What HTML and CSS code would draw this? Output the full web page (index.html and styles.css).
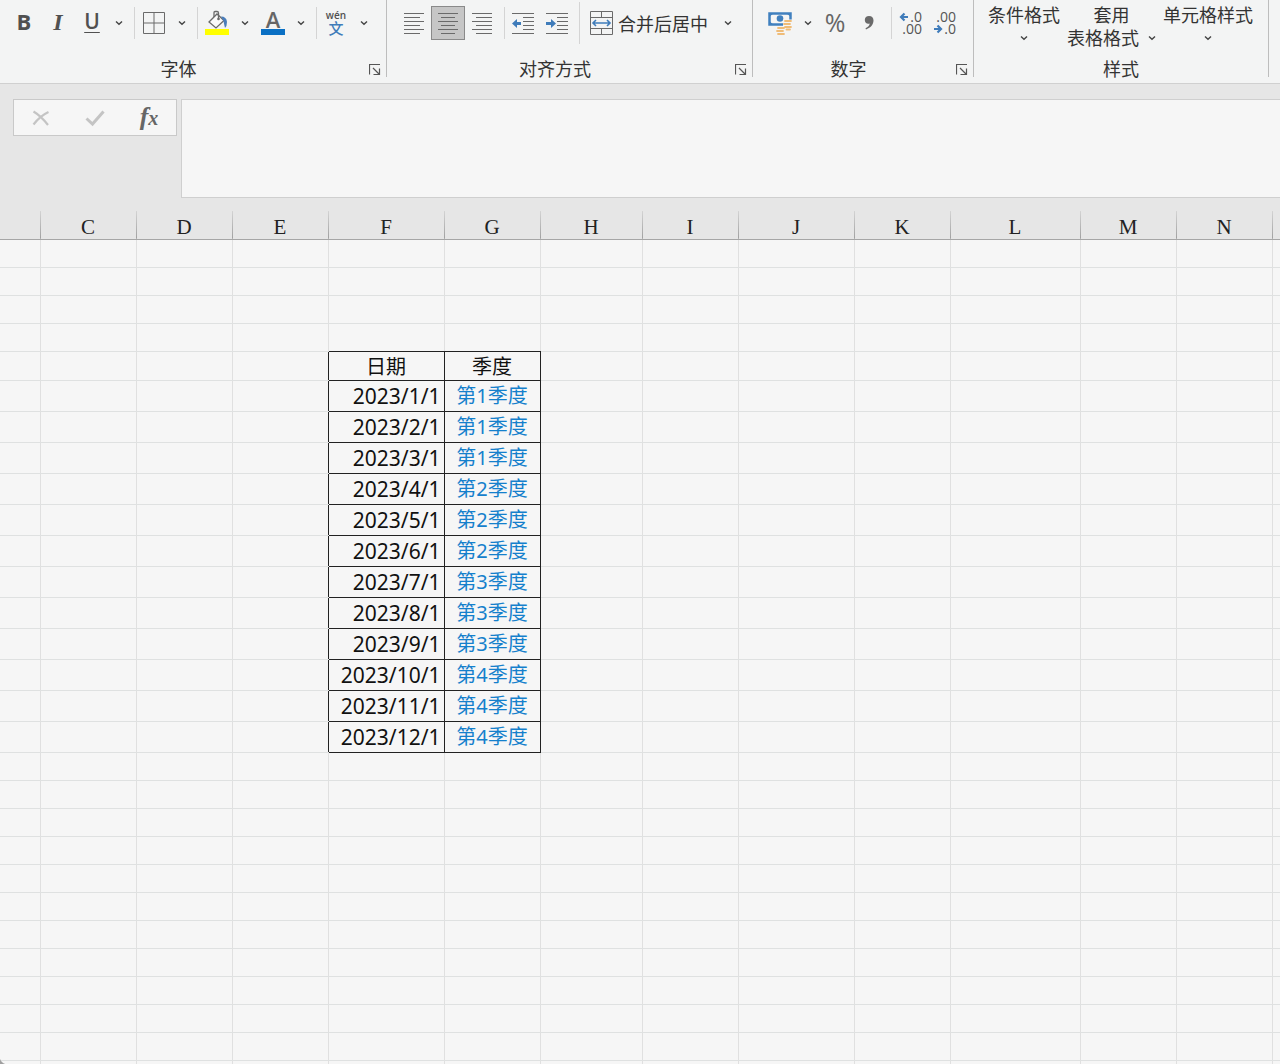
FILE: index.html
```html
<!DOCTYPE html>
<html lang="zh-CN">
<head>
    <meta charset="UTF-8">
    <meta name="viewport" content="width=device-width, initial-scale=1.0">
    <title>季度</title>
    <link rel="stylesheet" href="styles.css">
</head>
<body>
    <svg class="defs" aria-hidden="true">
        <symbol id="chevron" viewBox="0 0 8 6">
            <path d="M1 1.5 L4 4.3 L7 1.5" fill="none" stroke="#444" stroke-width="1.4"/>
        </symbol>
        <symbol id="launcher" viewBox="0 0 12 12">
            <path d="M.5 10.500 V.5 H11 M4 4 L10 10 M10.500 4.500 V10.500 H4.500" fill="none" stroke="#555" stroke-width="1.200"/>
        </symbol>
    </svg>

    <div class="ribbon">
        <!-- 字体 -->
        <section class="group">
            <div class="tools tools-font">
                <button class="tool bold" aria-label="加粗">B</button>
                <button class="tool italic" aria-label="倾斜">I</button>
                <button class="tool underline" aria-label="下划线">U</button>
                <button class="drop" aria-label="下划线选项"><svg width="8" height="6"><use href="#chevron"/></svg></button>
                <span class="sep"></span>
                <button class="tool wide" aria-label="边框">
                    <svg width="22" height="22" viewBox="0 0 22 22"><path d="M.5 .5 H21.500 V21.500 H.5 Z M11 .5 V21.500 M.5 11 H21.500" fill="none" stroke="#6a6a6a"/></svg>
                </button>
                <button class="drop" aria-label="边框选项"><svg width="8" height="6"><use href="#chevron"/></svg></button>
                <span class="sep"></span>
                <button class="tool wide" aria-label="填充颜色">
                    <svg width="24" height="28" viewBox="0 0 24 28">
                        <path d="M4 13 L12 5 L19 11.500 L11 19 Z" fill="#fafafa" stroke="#6a6a6a" stroke-width="1.300"/>
                        <path d="M9 8 V3.500 Q9 2.500 10 2.500 H12 Q13.500 2.500 13.500 4 V10" fill="none" stroke="#6a6a6a" stroke-width="1.300"/>
                        <circle cx="13.500" cy="10" r="1.300" fill="#6a6a6a"/>
                        <path d="M16 7.500 Q21.500 7.500 22 13 Q22 17 20 19 Q19 15 18.500 12 Z" fill="#4a7ebb"/>
                        <rect y="20" width="24" height="6" fill="#ff0"/>
                    </svg>
                </button>
                <button class="drop" aria-label="填充颜色选项"><svg width="8" height="6"><use href="#chevron"/></svg></button>
                <button class="tool wide" aria-label="字体颜色">
                    <svg width="24" height="28" viewBox="0 0 24 28">
                        <text class="letter-a" x="12" y="19" text-anchor="middle">A</text>
                        <rect y="20" width="24" height="6" fill="#0a70c4"/>
                    </svg>
                </button>
                <button class="drop" aria-label="字体颜色选项"><svg width="8" height="6"><use href="#chevron"/></svg></button>
                <span class="sep"></span>
                <button class="tool wide pinyin" aria-label="拼音指南"><span>wén</span><b>文</b></button>
                <button class="drop" aria-label="拼音选项"><svg width="8" height="6"><use href="#chevron"/></svg></button>
            </div>
            <div class="caption">
                <span>字体</span>
                <button class="launch" aria-label="字体设置"><svg width="12" height="12"><use href="#launcher"/></svg></button>
            </div>
        </section>
        <span class="divider"></span>

        <!-- 对齐方式 -->
        <section class="group">
            <div class="tools tools-align">
                <button class="tool" aria-label="左对齐">
                    <svg width="22" height="22" viewBox="0 0 22 22"><path d="M1 1.500 H21 M1 5.500 H17 M1 9.500 H21 M1 13.500 H17 M1 17.500 H21 M1 21.500 H17" stroke="#6a6a6a"/></svg>
                </button>
                <button class="tool active" aria-label="居中">
                    <svg width="22" height="22" viewBox="0 0 22 22"><path d="M1 1.500 H21 M4 5.500 H18 M1 9.500 H21 M4 13.500 H18 M1 17.500 H21 M4 21.500 H18" stroke="#6a6a6a"/></svg>
                </button>
                <button class="tool" aria-label="右对齐">
                    <svg width="22" height="22" viewBox="0 0 22 22"><path d="M1 1.500 H21 M5 5.500 H21 M1 9.500 H21 M5 13.500 H21 M1 17.500 H21 M5 21.500 H21" stroke="#6a6a6a"/></svg>
                </button>
                <span class="sep"></span>
                <button class="tool" aria-label="减少缩进量">
                    <svg width="22" height="22" viewBox="0 0 22 22">
                        <path d="M0 1.500 H22 M11 5.500 H22 M11 9.500 H22 M11 13.500 H22 M11 17.500 H22 M0 21.500 H22" stroke="#6a6a6a"/>
                        <path d="M0 11.500 L5 7 V10 H9 V13 H5 V16 Z" fill="#3f7cba"/>
                    </svg>
                </button>
                <button class="tool" aria-label="增加缩进量">
                    <svg width="22" height="22" viewBox="0 0 22 22">
                        <path d="M0 1.500 H22 M11 5.500 H22 M11 9.500 H22 M11 13.500 H22 M11 17.500 H22 M0 21.500 H22" stroke="#6a6a6a"/>
                        <path d="M10 11.500 L5 7 V10 H0 V13 H5 V16 Z" fill="#3f7cba"/>
                    </svg>
                </button>
                <span class="sep tall"></span>
                <button class="merge">
                    <svg width="24" height="24" viewBox="0 0 24 24">
                        <path d="M1.500 .5 H23.500 V23.500 H1.500 Z M1.500 6.500 H23.500 M1.500 17.500 H23.500 M12.500 .5 V6.500 M12.500 17.500 V23.500" fill="none" stroke="#6a6a6a"/>
                        <path d="M4 12 H21 M7 9 L4 12 L7 15 M18 9 L21 12 L18 15" fill="none" stroke="#3f7cba" stroke-width="1.600"/>
                    </svg>
                    合并后居中
                </button>
                <button class="drop" aria-label="合并选项"><svg width="8" height="6"><use href="#chevron"/></svg></button>
            </div>
            <div class="caption">
                <span>对齐方式</span>
                <button class="launch" aria-label="对齐设置"><svg width="12" height="12"><use href="#launcher"/></svg></button>
            </div>
        </section>
        <span class="divider"></span>

        <!-- 数字 -->
        <section class="group">
            <div class="tools tools-number">
                <button class="tool wide" aria-label="会计数字格式">
                    <svg width="24" height="24" viewBox="0 0 24 24">
                        <rect x="1.500" y="2.500" width="21" height="11" fill="#f5f5f5" stroke="#4080bf" stroke-width="2.500"/>
                        <path d="M1 2 H6 L1 6 Z M23 2 H18 L23 6 Z M1 14 V10 L6 14 Z" fill="#4080bf"/>
                        <circle cx="12" cy="7.500" r="3.300" fill="#4080bf"/>
                        <path d="M15 8.500 H24 V20 H18 V24 H8 V15 H15 Z" fill="#f5f5f5"/>
                        <path d="M17 10 H23 M16 13 H22 M17 16 H23 M18.500 18.500 H22 M10 17 H16 M9 20 H15 M10 23 H16" stroke="#efbc78" stroke-width="1.800" stroke-linecap="round"/>
                    </svg>
                </button>
                <button class="drop" aria-label="会计格式选项"><svg width="8" height="6"><use href="#chevron"/></svg></button>
                <button class="tool percent" aria-label="百分比样式">%</button>
                <button class="tool" aria-label="千位分隔样式">
                    <svg width="10" height="16" viewBox="0 0 10 16"><path d="M5 1 C8 1 9.500 3 9.500 5.500 C9.500 10 6 13 2 14.500 L1.500 13.300 C4 12 5.500 10.500 5.700 8.500 C3 9.500 .8 7.500 .8 5 C.8 2.500 2.500 1 5 1 Z" fill="#6a6a6a"/></svg>
                </button>
                <span class="sep"></span>
                <button class="tool" aria-label="增加小数位数">
                    <svg class="decimal" width="24" height="26" viewBox="0 0 24 26">
                        <path d="M10 7 H3 M6.500 3.500 L3 7 L6.500 10.500" fill="none" stroke="#3f7cba" stroke-width="2.200"/>
                        <text x="24" y="12" text-anchor="end">.0</text>
                        <text x="24" y="24" text-anchor="end">.00</text>
                    </svg>
                </button>
                <button class="tool" aria-label="减少小数位数">
                    <svg class="decimal" width="24" height="26" viewBox="0 0 24 26">
                        <text x="24" y="12" text-anchor="end">.00</text>
                        <path d="M2 19 H9 M5.500 15.500 L9 19 L5.500 22.500" fill="none" stroke="#3f7cba" stroke-width="2.200"/>
                        <text x="24" y="24" text-anchor="end">.0</text>
                    </svg>
                </button>
            </div>
            <div class="caption">
                <span>数字</span>
                <button class="launch" aria-label="数字设置"><svg width="12" height="12"><use href="#launcher"/></svg></button>
            </div>
        </section>
        <span class="divider"></span>

        <!-- 样式 -->
        <section class="group">
            <div class="tools tools-style">
                <button class="style-btn"><span>条件格式</span><span><svg width="8" height="6"><use href="#chevron"/></svg></span></button>
                <button class="style-btn"><span>套用</span><span>表格格式<svg width="8" height="6"><use href="#chevron"/></svg></span></button>
                <button class="style-btn"><span>单元格样式</span><span><svg width="8" height="6"><use href="#chevron"/></svg></span></button>
            </div>
            <div class="caption"><span>样式</span></div>
        </section>
        <span class="divider"></span>
    </div>

    <div class="formula-bar">
        <div class="formula-buttons">
            <button aria-label="取消"><svg width="18" height="16" viewBox="0 0 18 16"><path d="M1.500 1.500 Q9 6 16 15 M16.500 2 Q8 6 1.500 14.500" fill="none" stroke="#c4c4c4" stroke-width="2.200"/></svg></button>
            <button aria-label="输入"><svg width="20" height="16" viewBox="0 0 20 16"><path d="M1.500 8.500 L7.500 14 L18.500 1.500" fill="none" stroke="#c4c4c4" stroke-width="3"/></svg></button>
            <button class="fx" aria-label="插入函数">f<small>x</small></button>
        </div>
        <textarea class="formula-input" aria-label="编辑栏"></textarea>
    </div>

    <div class="sheet">
        <table>
            <colgroup>
                <col class="col-b"><col><col><col><col class="col-f"><col><col class="col-h"><col><col class="col-j"><col><col class="col-l"><col><col><col>
            </colgroup>
            <thead>
                <tr>
                    <th></th><th>C</th><th>D</th><th>E</th><th>F</th><th>G</th><th>H</th><th>I</th><th>J</th><th>K</th><th>L</th><th>M</th><th>N</th><th></th>
                </tr>
            </thead>
            <tbody id="rows"></tbody>
        </table>
    </div>

    <script>
        const COLS = 14;
        const COL_F = 4;
        const COL_G = 5;
        const rows = document.getElementById('rows');

        function addRow(className, date, quarter) {
            const tr = rows.insertRow();
            tr.className = className;
            for (let i = 0; i < COLS; i++) {
                tr.insertCell();
            }
            if (date) {
                tr.cells[COL_F].textContent = date;
                tr.cells[COL_G].textContent = quarter;
            }
        }

        // empty rows above the table
        for (let i = 0; i < 4; i++) addRow(i === 3 ? 'before' : '');

        addRow('head', '日期', '季度');
        for (let month = 1; month <= 12; month++) {
            addRow('data', '2023/' + month + '/1', '第' + Math.ceil(month / 3) + '季度');
        }

        // empty rows below
        for (let i = 0; i < 12; i++) addRow('');
    </script>
</body>
</html>
```

FILE: styles.css
```css
* {
    box-sizing: border-box;
}

body {
    margin: 0;
    height: 100vh;
    display: flex;
    flex-direction: column;
    overflow: hidden;
    background: #e6e6e6;
    color: #333;
    font-family: "Noto Sans CJK SC", sans-serif;
    font-size: 18px;
}

button {
    display: flex;
    align-items: center;
    justify-content: center;
    padding: 0;
    border: 0;
    background: none;
    color: inherit;
    font: inherit;
}

svg {
    flex: none;
    overflow: visible;
}

.defs {
    position: absolute;
    width: 0;
    height: 0;
}

/* Ribbon */
.ribbon {
    display: flex;
    flex: none;
    height: 84px;
    background: #f3f4f4;
    border-bottom: 1px solid #d0d0d0;
}

.group {
    display: flex;
    flex: none;
    flex-direction: column;
}

.divider {
    flex: none;
    width: 1px;
    height: 77px;
    background: #bdbdbd;
}

.tools {
    display: flex;
    flex: none;
    align-items: center;
    height: 46px;
}

.tools-font {
    padding: 0 12px 0 7px;
}

.tools-align {
    padding: 0 14px 0 10px;
}

.tools-number {
    padding: 0 12px 0 9px;
}

.tools-style {
    align-items: flex-start;
    gap: 7px;
    padding: 3px 15px 0 14px;
}

.tool {
    width: 34px;
    height: 34px;
    color: #505050;
}

.wide {
    width: 36px;
}

.active {
    background: #c6c6c6;
    border: 1px solid #8a8a8a;
}

.drop {
    width: 20px;
    height: 34px;
}

.sep {
    width: 1px;
    height: 32px;
    margin: 0 1px 0 5px;
    background: #d4d4d4;
}

.tall {
    height: 42px;
}

.bold {
    padding-bottom: 4px;
    font: bold 22px "Open Sans", sans-serif;
}

.italic {
    padding-bottom: 2px;
    font: italic bold 24px "Liberation Serif", serif;
}

.underline {
    padding-bottom: 4px;
    font: 600 21px "Open Sans", sans-serif;
    text-decoration: underline 1px;
    text-underline-offset: 3px;
}

.letter-a {
    font: 600 22px "Open Sans", sans-serif;
    fill: #666;
}

.pinyin {
    flex-direction: column;
    padding-bottom: 2px;
    font: 600 10px "Open Sans", sans-serif;
    line-height: 12px;
}

.pinyin b {
    color: #3f7cba;
    font: 500 15px "Noto Sans CJK SC", sans-serif;
    line-height: 14px;
}

.merge {
    gap: 5px;
    padding: 0 10px 0 8px;
    line-height: 24px;
    white-space: nowrap;
}

.percent {
    padding-bottom: 2px;
    color: #666;
    font: 25px "Open Sans", sans-serif;
}

.decimal text {
    font: 14px "Open Sans", sans-serif;
    fill: #555;
}

.style-btn {
    flex-direction: column;
    line-height: 23px;
    white-space: nowrap;
}

.style-btn span {
    display: flex;
    align-items: center;
    gap: 9px;
    height: 23px;
}

.caption {
    display: flex;
    align-items: center;
    height: 36px;
    padding-top: 8px;
    line-height: 24px;
}

.caption span {
    flex: 1;
    text-align: center;
}

.launch {
    width: 29px;
    height: 24px;
    padding: 3px 0 0 6px;
}

/* Formula bar */
.formula-bar {
    display: flex;
    flex: none;
    align-items: flex-start;
    gap: 4px;
    padding: 15px 0 13px 13px;
}

.formula-buttons {
    display: flex;
    background: #f6f6f6;
    border: 1px solid #c9c9c9;
}

.formula-buttons button {
    width: 54px;
    height: 35px;
}

.formula-buttons .fx {
    align-items: baseline;
    color: #666;
    font: italic bold 26px "Liberation Serif", serif;
    line-height: 33px;
}

.fx small {
    font-size: 20px;
}

.formula-input {
    flex: 1;
    height: 99px;
    border: 1px solid #cfcfcf;
    border-right: 0;
    outline: 0;
    resize: none;
    background: #f6f6f6;
}

/* Sheet */
.sheet {
    position: relative;
    flex: 1;
    overflow: hidden;
    background: #f6f6f6;
}

/* rounded window corner */
.sheet::after {
    content: "";
    position: absolute;
    left: 0;
    bottom: 0;
    width: 8px;
    height: 8px;
    background: radial-gradient(circle at 100% 0, transparent 8px, #a0a0a0 9px);
}

table {
    width: 1368px;
    table-layout: fixed;
    border-collapse: collapse;
}

col {
    width: 96px;
}

.col-b {
    width: 40px;
}

.col-f,
.col-j {
    width: 116px;
}

.col-h {
    width: 102px;
}

.col-l {
    width: 130px;
}

th {
    height: 28px;
    padding: 6px 0 0;
    background: linear-gradient(#d4d4d4, #a0a0a0) left / 1px 100% no-repeat #e6e6e6;
    border-bottom: 1px solid #a6a6a6;
    color: #222;
    font: 21px "Liberation Serif", serif;
    line-height: 21px;
}

th:first-child {
    background: #e6e6e6;
}

td {
    height: 28px;
    padding: 0;
    border-right: 1px solid #e0e0e0;
    border-bottom: 1px solid #dfe1e1;
    line-height: 26px;
    white-space: nowrap;
}

.head td {
    height: 29px;
}

.data td {
    height: 31px;
}

/* F and G hold the bordered table */
.head td:nth-child(5),
.head td:nth-child(6),
.data td:nth-child(5),
.data td:nth-child(6) {
    border: 1px solid #222;
}

.before td:nth-child(5),
.before td:nth-child(6) {
    border-bottom-color: #222;
}

.head td:nth-child(4),
.data td:nth-child(4) {
    border-right-color: #222;
}

.head td {
    color: #111;
    font-size: 20px;
    text-align: center;
}

.data td:nth-child(5) {
    padding: 1px 3px 0 0;
    color: #111;
    font-family: "Noto Sans", sans-serif;
    font-size: 21px;
    text-align: right;
}

.data td:nth-child(6) {
    color: #1580cc;
    font-family: "Noto Sans", "Noto Sans CJK SC", sans-serif;
    font-size: 20px;
    text-align: center;
}
```
